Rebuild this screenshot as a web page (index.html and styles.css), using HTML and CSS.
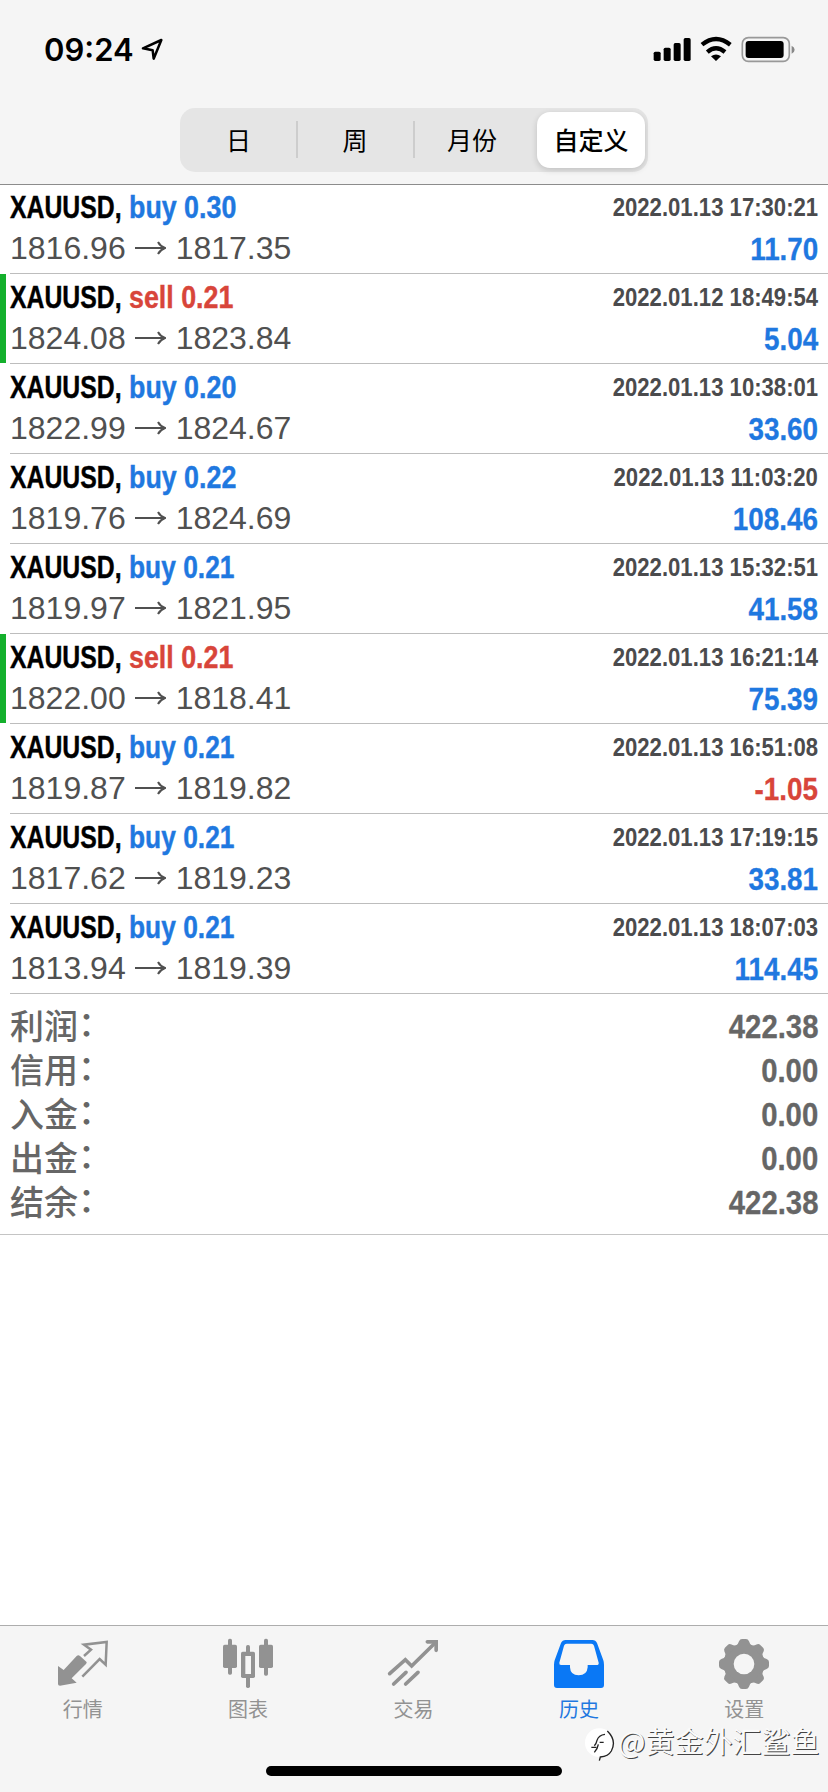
FILE: index.html
```html
<!DOCTYPE html>
<html lang="zh-CN">
<head>
<meta charset="utf-8">
<title>历史</title>
<link rel="stylesheet" href="styles.css">
</head>
<body>
<div class="app">
  <header class="header">
    <div class="status">
      <span class="time">09:24</span>
      <svg class="location" viewBox="0 0 66 66" width="22" height="22"><path d="M6 31 L61 6 L38 62 L35 37 Z" fill="none" stroke="#000" stroke-width="7.5" stroke-linejoin="round"/></svg>
      <svg class="signal" viewBox="715 108 430 80" width="143.3" height="26.7">
        <rect x="717" y="155" width="21" height="28" rx="5"/><rect x="747" y="143" width="21" height="40" rx="5"/><rect x="777" y="129" width="21" height="54" rx="5"/><rect x="807" y="114" width="21" height="69" rx="5"/>
        <path d="M862 134 Q904 100 947 134" fill="none" stroke="#000" stroke-width="13"/>
        <path d="M878 156 Q904 133 931 156" fill="none" stroke="#000" stroke-width="13"/>
        <path d="M889 169 Q904 158 919 169 L904 183 Z"/>
        <rect x="983" y="113" width="141" height="71" rx="18" fill="none" stroke="#999" stroke-width="5"/>
        <rect x="993" y="123" width="114" height="51" rx="9"/>
        <path d="M1131 137 Q1140 141 1140 149 Q1140 157 1131 161 Z" fill="#888"/>
      </svg>
    </div>
    <nav class="segments">
      <span class="segment">日</span>
      <span class="segment divided">周</span>
      <span class="segment divided">月份</span>
      <span class="segment current"><b class="selected">自定义</b></span>
    </nav>
  </header>
  <main class="content">
    <ul class="deals" id="deals"></ul>
    <dl class="summary">
      <div class="total"><dt>利润<i>：</i></dt><dd>422.38</dd></div>
      <div class="total"><dt>信用<i>：</i></dt><dd>0.00</dd></div>
      <div class="total"><dt>入金<i>：</i></dt><dd>0.00</dd></div>
      <div class="total"><dt>出金<i>：</i></dt><dd>0.00</dd></div>
      <div class="total"><dt>结余<i>：</i></dt><dd>422.38</dd></div>
    </dl>
  </main>
  <footer class="tabbar">
    <a class="tab">
      <svg viewBox="168 84 156 156" width="52" height="52"><path d="M227 138 Q232 133 237 138 L256 155 Q259 158 255 162 L212 205 L227 218 L177 227 Q171 227 171 222 V168 L188 180 Z" fill="#929292"/><path d="M249 138 L270 119 L249 104 L317 96 L314 164 L296 147 L244 200" fill="none" stroke="#929292" stroke-width="7.5"/></svg>
      <span>行情</span>
    </a>
    <a class="tab">
      <svg viewBox="666 84 156 156" width="52" height="52" fill="#929292"><rect x="684" y="86" width="12" height="108" rx="5"/><rect x="669" y="104" width="42" height="70" rx="5"/><rect x="792" y="86" width="12" height="111" rx="5"/><rect x="777" y="104" width="42" height="70" rx="5"/><rect x="738" y="105" width="12" height="129" rx="5"/><rect x="723" y="125" width="42" height="79" rx="5"/><rect x="736" y="138" width="17" height="54" fill="#f5f5f5"/></svg>
      <span>图表</span>
    </a>
    <a class="tab">
      <svg viewBox="261 84 156 156" width="52" height="52" fill="none" stroke="#929292" stroke-width="11" stroke-linecap="round"><path d="M269 191 L316 149 L335 168 L405 99"/><path d="M382 95.500 H408.500 V121"/><path d="M281 222 L318 187 M317 222 L354 187"/></svg>
      <span>交易</span>
    </a>
    <a class="tab active">
      <svg viewBox="66 84 156 156" width="52" height="52"><path fill="#0a78f5" fill-rule="evenodd" d="M104 90 H184 Q194 90 198 99 L217 151 Q219 157 219 164 V225 Q219 234 210 234 H78 Q69 234 69 225 V164 Q69 157 71 151 L90 99 Q94 90 104 90 Z M107 101 Q101 101 99 107 L85 158 Q84 165 90 165 H117 V172 Q118 196 143 196 Q168 196 170 172 V165 H197 Q204 165 203 158 L189 107 Q187 101 181 101 Z"/></svg>
      <span>历史</span>
    </a>
    <a class="tab">
      <svg viewBox="564 84 156 156" width="52" height="52"><g fill="#929292"><circle cx="642" cy="162" r="61"/><g id="cog"><path id="tooth" d="M616 108 Q625 104 627 94 Q630 87 636 87 H648 Q654 87 657 94 Q659 104 668 108 Z"/><use href="#tooth" transform="rotate(45 642 162)"/><use href="#tooth" transform="rotate(90 642 162)"/><use href="#tooth" transform="rotate(135 642 162)"/></g><use href="#cog" transform="rotate(180 642 162)"/></g><circle cx="642" cy="162" r="31" fill="#f5f5f5"/></svg>
      <span>设置</span>
    </a>
    <div class="home"></div>
    <div class="watermark">
      <svg viewBox="0 0 90 105" width="30" height="35"><circle cx="43" cy="47" r="43" fill="#fff"/><path d="M67 12 Q96 40 79 72 Q70 88 46 90 L43 101 M28 56 Q34 50 36 40 Q41 24 60 22 M19 61 H34 M44 46 H56 M40 52 Q38 65 28 76" fill="none" stroke="#222" stroke-width="4"/></svg>
      <span>@黄金外汇鲨鱼</span>
    </div>
  </footer>
</div>
<script src="deals.js"></script>
</body>
</html>
```
FILE: styles.css
```css
* { box-sizing: border-box; }
body { margin: 0; background: #fff; font-family: "Liberation Sans", "Noto Sans CJK SC", sans-serif; }
.app { width: 828px; height: 1792px; display: flex; flex-direction: column; overflow: hidden; }
.header { height: 185px; flex: none; background: #f5f5f5; border-bottom: 1px solid #8c8c8c; display: flex; flex-direction: column; align-items: center; }
.status { width: 100%; height: 108px; padding: 30px 32px 0 44px; display: flex; align-items: flex-start; }
.time { width: 97px; font: 600 31px/40px Inter, sans-serif; white-space: nowrap; }
.location { margin-top: 8px; }
.signal { margin: 6px 0 0 auto; }
.segments { width: 468px; height: 64px; border-radius: 15px; background: #e5e5e5; display: grid; grid-template-columns: repeat(4, 117px); }
.segment { display: flex; align-items: center; justify-content: center; padding-bottom: 2px; font: 400 25px/54px "Noto Sans CJK SC", sans-serif; color: #000; }
.divided { margin-left: -1px; background: linear-gradient(#cdcdcd, #cdcdcd) 0 13px / 2px 37px no-repeat; }
.current { padding: 0 0 0 3px; }
.selected { width: 108px; height: 56px; border-radius: 13px; background: #fff; text-align: center; font-weight: 500; box-shadow: 0 2px 6px rgba(0, 0, 0, .16); }
.content { flex: 1; background: #fff; }
.deals { list-style: none; margin: -1px 0 0; padding: 0; }
.deal { height: 90px; display: grid; grid-template-rows: 39px 40px; align-content: start; padding: 7px 10px 0 10px; position: relative; background: linear-gradient(#bdbdbd, #bdbdbd) 10px 89px / 818px 1px no-repeat; }
.deal.flagged::before { content: ""; position: absolute; left: 0; top: 0; width: 6px; height: 89px; background: #14b02c; }
.line { display: flex; justify-content: space-between; align-items: flex-start; white-space: nowrap; }
.title { display: flex; font-weight: 700; font-size: 31px; line-height: 34px; -webkit-text-stroke: .4px; }
.symbol { width: 119px; color: #000; transform: scaleX(.8); transform-origin: left; }
.side { transform: scaleX(.865); transform-origin: left; }
.buy.tight { transform: scaleX(.85); }
.buy, .plus { color: #1f78e0; }
.sell, .minus { color: #d8453a; }
.date { font-weight: 700; font-size: 25px; line-height: 32px; color: #4b4b4d; transform: scaleX(.885); transform-origin: right; }
.prices { display: flex; font-size: 32px; line-height: 36px; color: #505050; }
.prices svg { margin: 11px 10px 0 9px; }
.profit { font-weight: 700; font-size: 32px; line-height: 38px; -webkit-text-stroke: .3px; transform: scaleX(.87); transform-origin: right; }
.summary { margin: 0; height: 241px; padding: 10px 10px 0 10px; border-bottom: 1px solid #c4c4c4; }
.total { height: 44px; display: flex; justify-content: space-between; color: #666; }
.total dt { font: 500 34px/42px "Noto Sans CJK SC", sans-serif; }
.total i { font-style: normal; position: relative; top: -3px; }
.total dd { margin: 0; font-weight: 700; font-size: 33.5px; line-height: 46px; -webkit-text-stroke: .3px; transform: scaleX(.875); transform-origin: right; }
.tabbar { height: 167px; flex: none; position: relative; background: #f5f5f5; border-top: 1px solid #adadad; display: grid; grid-template-columns: repeat(5, 1fr); padding-right: 1px; }
.tab { display: flex; flex-direction: column; align-items: center; padding-top: 12px; color: #929292; font: 400 20px/30px "Noto Sans CJK SC", sans-serif; }
.tab span { margin-top: 4px; }
.tab.active { color: #1f78e0; }
.home { position: absolute; left: 266px; top: 140px; width: 296px; height: 10px; border-radius: 5px; background: #000; }
.watermark { position: absolute; left: 585px; top: 101px; display: flex; color: #fafafa; font: 400 29px/26px "Noto Sans CJK SC", sans-serif; white-space: nowrap; text-shadow: 1px 1px 0 #444; }
.watermark span { margin-left: 3px; }
```
FILE: deals.js
```js
const deals = [
  ["buy", "0.30", "1816.96", "1817.35", "2022.01.13 17:30:21", "11.70"],
  ["sell", "0.21", "1824.08", "1823.84", "2022.01.12 18:49:54", "5.04", true],
  ["buy", "0.20", "1822.99", "1824.67", "2022.01.13 10:38:01", "33.60"],
  ["buy", "0.22", "1819.76", "1824.69", "2022.01.13 11:03:20", "108.46"],
  ["buy", "0.21", "1819.97", "1821.95", "2022.01.13 15:32:51", "41.58"],
  ["sell", "0.21", "1822.00", "1818.41", "2022.01.13 16:21:14", "75.39", true],
  ["buy", "0.21", "1819.87", "1819.82", "2022.01.13 16:51:08", "-1.05"],
  ["buy", "0.21", "1817.62", "1819.23", "2022.01.13 17:19:15", "33.81"],
  ["buy", "0.21", "1813.94", "1819.39", "2022.01.13 18:07:03", "114.45"]
];
const arrow = '<svg viewBox="0 0 31 14" width="31" height="14" fill="none" stroke="#505050" stroke-width="2"><path d="M0 7H30M23 1Q25 5 30 7Q25 9 23 13"/></svg>';
document.getElementById("deals").innerHTML = deals.map(([side, volume, open, close, date, profit, flagged]) => `
  <li class="deal${flagged ? " flagged" : ""}">
    <div class="line"><div class="title"><span class="symbol">XAUUSD,</span><span class="side ${side}${volume.endsWith("1") ? " tight" : ""}">${side} ${volume}</span></div><span class="date">${date}</span></div>
    <div class="line"><div class="prices"><span>${open}</span>${arrow}<span>${close}</span></div><span class="profit ${profit.startsWith("-") ? "minus" : "plus"}">${profit}</span></div>
  </li>`).join("");
```
